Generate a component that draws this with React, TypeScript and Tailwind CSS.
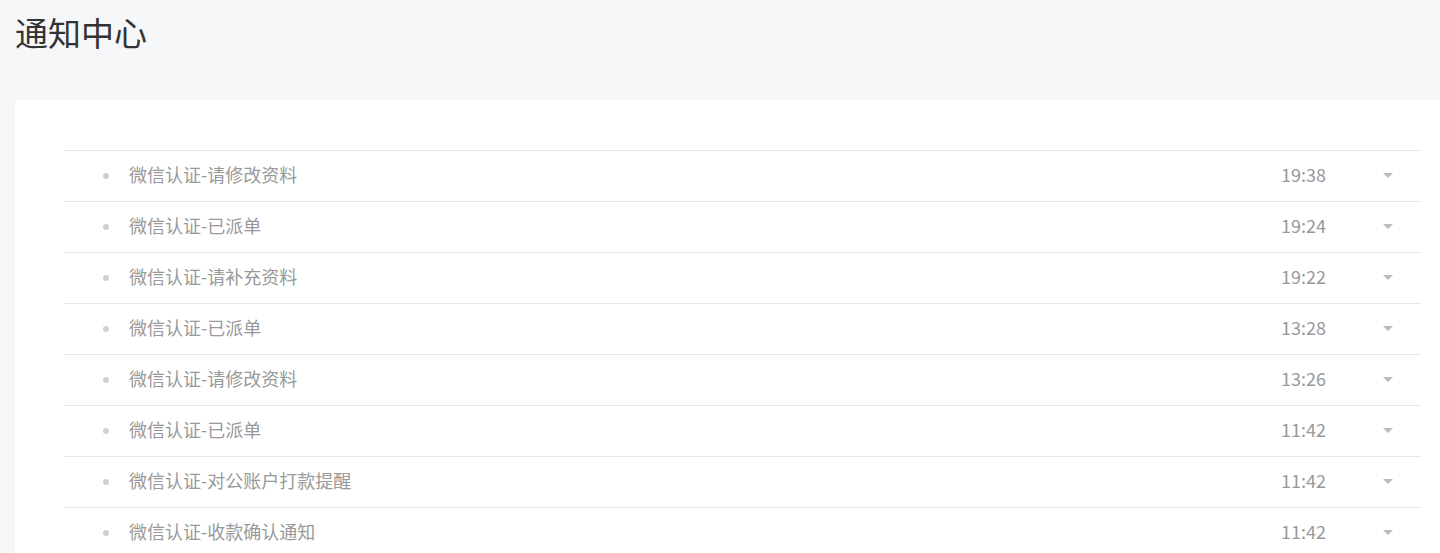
import React from "react";

const items = [
  { title: "微信认证-请修改资料", time: "19:38" },
  { title: "微信认证-已派单", time: "19:24" },
  { title: "微信认证-请补充资料", time: "19:22" },
  { title: "微信认证-已派单", time: "13:28" },
  { title: "微信认证-请修改资料", time: "13:26" },
  { title: "微信认证-已派单", time: "11:42" },
  { title: "微信认证-对公账户打款提醒", time: "11:42" },
  { title: "微信认证-收款确认通知", time: "11:42" },
];

export default function App() {
  return (
    <div
      className="min-h-[553px] bg-[#f6f7f9] overflow-hidden"
      style={{ fontFamily: '"Microsoft YaHei", "Noto Sans CJK SC", "Liberation Sans", sans-serif' }}
    >
      <h1 className="pl-[15px] pt-[9px] h-[100px] text-[33px] leading-[46px] font-normal text-[#333]">
        通知中心
      </h1>
      <div className="ml-[15px] bg-white rounded-l-[4px] shadow-[0_0_2px_rgba(0,0,0,0.04)] pt-[50px] pl-[50px] pr-[19px]">
        <ul>
          {items.map((it, i) => (
            <li
              key={i}
              className="flex items-center h-[51px] pb-[3px] border-t border-[#e6e6e6]"
            >
              <span className="ml-[38px] mt-[2px] w-[6px] h-[6px] rounded-full bg-[#d0d0d0]" />
              <span className="ml-[20px] flex-1 text-[18px] text-[#999]">{it.title}</span>
              <span className="text-[18px] text-[#999] w-[45px]">{it.time}</span>
              <span className="ml-[57px] mr-[28px] mt-[2px] w-0 h-0 border-l-[5px] border-r-[5px] border-t-[5px] border-l-transparent border-r-transparent border-t-[#bbb]" />
            </li>
          ))}
        </ul>
      </div>
    </div>
  );
}
